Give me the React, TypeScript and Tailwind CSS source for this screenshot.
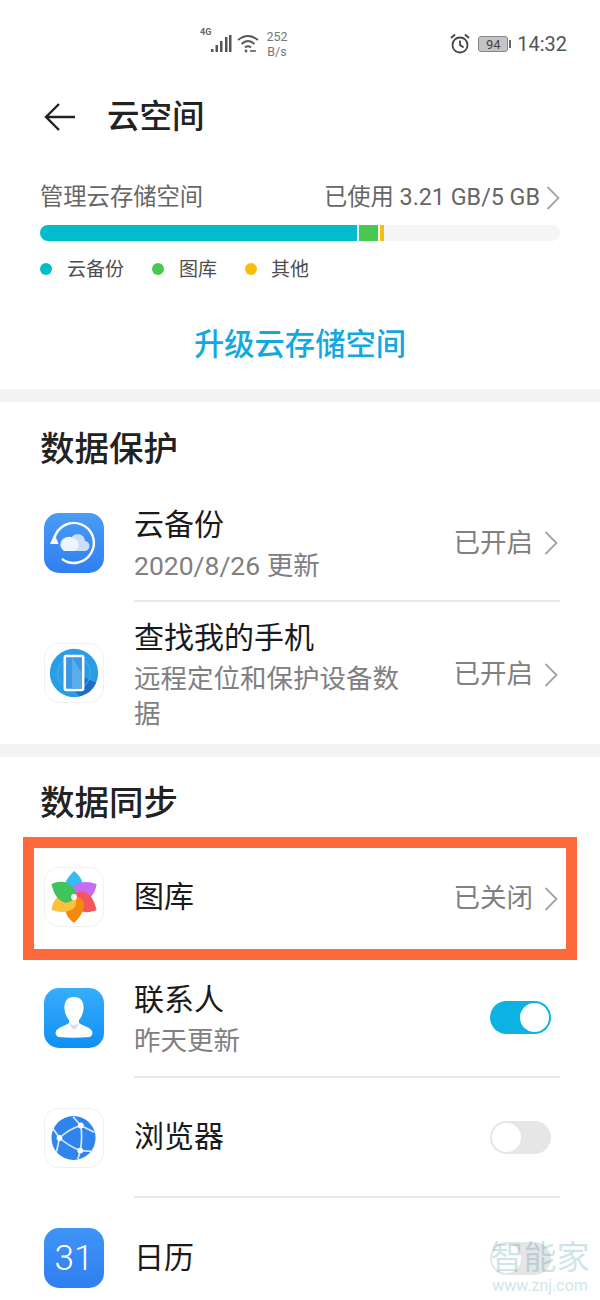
import { ReactNode } from "react";

const FONT = "font-['Roboto','Noto_Sans_CJK_SC',sans-serif]";

function Squircle({ children, className }: { children: ReactNode; className: string }) {
  return (
    <div className={`flex h-[60px] w-[60px] shrink-0 items-center justify-center overflow-hidden rounded-[15px] ${className}`}>
      {children}
    </div>
  );
}

function Chevron({ className }: { className: string }) {
  return (
    <svg width="14" height="24" viewBox="0 0 14 24" fill="none" stroke="#a3a3a3" strokeWidth="1.800" className={className}>
      <path d="M1.500 1 L12.500 12 L1.500 23" />
    </svg>
  );
}

function BackupIcon() {
  return (
    <Squircle className="bg-gradient-to-b from-[#4a9cf5] to-[#2f7ff0]">
      <svg width="60" height="60" viewBox="0 0 60 60" fill="none">
        <path d="M10.500 25 A20 20 0 1 1 18 46" stroke="#fff" strokeWidth="2.400" />
        <path d="M10.500 21 L6 31 L14.500 31 Z" fill="#fff" />
        <path d="M20 38 H40 A5 5 0 0 0 41 28 A7.500 7.500 0 0 0 27 25 A6.500 6.500 0 0 0 20 38 Z" fill="#c9dffa" />
        <path d="M20 38 H30 A6.500 6.500 0 0 0 31 26 A7 7 0 0 0 20 38 Z" fill="#eef5fe" />
      </svg>
    </Squircle>
  );
}

function FindPhoneIcon() {
  return (
    <Squircle className="border border-[#f1f1f1] bg-white">
      <svg width="60" height="60" viewBox="0 0 60 60" fill="none">
        <circle cx="30" cy="30" r="25" fill="#2b9de6" />
        <path d="M39 34 L53 40 A25 25 0 0 1 36 54 L30 48 H39 Z" fill="#1c6fc4" />
        <circle cx="30" cy="30" r="17" stroke="#4fb1ec" strokeWidth="1" />
        <rect x="20.500" y="12.500" width="19" height="35" rx="1.500" fill="#3d97e3" stroke="#fff" strokeWidth="2.600" />
        <path d="M28 14 L38 30 V46 H28 Z" fill="#5aaeea" />
      </svg>
    </Squircle>
  );
}

function GalleryIcon() {
  const petals = [
    { angle: 0, fill: "#35bdf0" },
    { angle: 60, fill: "#c56df0" },
    { angle: 120, fill: "#f4555f" },
    { angle: 180, fill: "#f58a0a" },
    { angle: 240, fill: "#fcc23f" },
    { angle: 300, fill: "#3fc45c" },
  ];
  return (
    <Squircle className="border border-[#f1f1f1] bg-white">
      <svg width="60" height="60" viewBox="0 0 60 60">
        {petals.map((p) => (
          <path
            key={p.angle}
            d="M30 3 C39 10 42 19 36 28 Q33 30 30 31 Q22 30 20 24 C19 15 24 9 30 3 Z"
            fill={p.fill}
            transform={`rotate(${p.angle} 30 30)`}
          />
        ))}
        <circle cx="30" cy="30" r="3" fill="#fff" />
      </svg>
    </Squircle>
  );
}

function ContactsIcon() {
  return (
    <Squircle className="bg-gradient-to-b from-[#35aefb] to-[#0d8ff5]">
      <svg width="60" height="60" viewBox="0 0 60 60">
        <path d="M30 9 C38 9 40 15 39.500 21 C39 26 37 30 35 32 V35 C39 38 46 39 48 43 Q49.500 47 46 49 Q30 50.500 14 49 Q10.500 47 12 43 C14 39 21 38 25 35 V32 C23 30 21 26 20.500 21 C20 15 22 9 30 9 Z" fill="#fff" />
        <path d="M25 35 Q30 39 35 35 L32 41 H28 Z" fill="#dcdcf5" />
      </svg>
    </Squircle>
  );
}

function BrowserIcon() {
  return (
    <Squircle className="border border-[#f1f1f1] bg-white">
      <svg width="60" height="60" viewBox="0 0 60 60" fill="none">
        <circle cx="29.500" cy="30" r="22.800" fill="#2f84ee" />
        <g stroke="#dcebfd" strokeWidth="1.700">
          <path d="M37 17 Q24 21 15 30 Q24 38 36.500 43 Q39 30 37 17" />
          <path d="M37 17 L29 8 M37 17 L51 24 M15 30 L8 20 M15 30 L12 44 M36.500 43 L50 44 M36.500 43 L34 52" />
        </g>
        <circle cx="37" cy="17" r="3" fill="#fff" />
        <circle cx="15" cy="30" r="3" fill="#fff" />
        <circle cx="36.500" cy="43" r="3" fill="#fff" />
      </svg>
    </Squircle>
  );
}

function CalendarIcon() {
  return (
    <Squircle className="bg-gradient-to-b from-[#3f94f6] to-[#2f7ff0]">
      <span className="text-[35px] leading-none font-light text-white">31</span>
    </Squircle>
  );
}

function RightValue({ text }: { text: string }) {
  return (
    <div className="flex shrink-0 items-center pt-[3px]">
      <span className="text-[26.500px] leading-none text-[#808080]">{text}</span>
      <Chevron className="mr-[2px] ml-[11px]" />
    </div>
  );
}

function Toggle({ on }: { on: boolean }) {
  return (
    <div className={`mr-[9px] flex h-[33px] w-[61px] items-center rounded-full p-[2px] ${on ? "justify-end bg-[#0bb2e2]" : "justify-start bg-[#e6e6e6]"}`}>
      <div className="h-[29px] w-[29px] rounded-full bg-white" />
    </div>
  );
}

function Row({
  icon,
  title,
  sub,
  right,
  height,
  divider = true,
  titleTop = false,
  raised = false,
}: {
  icon: ReactNode;
  title: string;
  sub?: string;
  right?: ReactNode;
  height: string;
  divider?: boolean;
  titleTop?: boolean;
  raised?: boolean;
}) {
  return (
    <div className={`flex items-center pl-[44px] pr-[40px] ${height}`}>
      <div className={`mr-[30px] ${raised ? "mb-[12px]" : ""}`}>{icon}</div>
      <div className={`flex h-full min-w-0 flex-1 items-center ${divider ? "border-b-2 border-[#e8e8e8]" : ""} ${raised ? "pb-[12px]" : ""}`}>
        <div className={`min-w-0 flex-1 ${titleTop ? "self-start pt-[16px]" : sub ? "pt-[4px]" : ""}`}>
          <div className="text-[30px] leading-[40px] text-[#1a1a1a]">{title}</div>
          {sub && <div className="mt-[3px] w-[272px] text-[26.500px] leading-[35px] text-[#808080]">{sub}</div>}
        </div>
        {right}
      </div>
    </div>
  );
}

function SectionTitle({ text, height }: { text: string; height: string }) {
  return (
    <div className={`flex items-center px-[40px] pt-[2px] text-[34.500px] font-medium text-[#222] ${height}`}>{text}</div>
  );
}

function LegendItem({ color, label, gap }: { color: string; label: string; gap: string }) {
  return (
    <div className={`flex items-center ${gap}`}>
      <span className={`h-[12px] w-[12px] rounded-full ${color}`} />
      <span className="text-[19px] leading-none text-[#4d4d4d]">{label}</span>
    </div>
  );
}

export default function App() {
  return (
    <div className={`relative h-[1300px] w-[600px] overflow-hidden bg-white ${FONT}`}>
      {/* Status bar */}
      <div className="flex h-[64px] items-center pt-[24px] pr-[33px] pl-[200px]">
        <div className="relative flex items-center">
          <span className="absolute top-[-1px] left-0 text-[9px] leading-none font-bold text-[#666]">4G</span>
          <svg width="32" height="20" viewBox="0 0 32 20" className="ml-[1px]" fill="#555">
            <rect x="10" y="15" width="2.500" height="3" />
            <rect x="14.500" y="11" width="2.500" height="7" />
            <rect x="19" y="7" width="2.500" height="11" />
            <rect x="24" y="3" width="2.500" height="15" />
            <rect x="28" y="1" width="2.500" height="17" />
          </svg>
          <svg width="24" height="20" viewBox="0 0 24 20" fill="none" stroke="#555" strokeWidth="1.800" className="ml-[3px]">
            <path d="M2 6 Q12 -2 22 6" />
            <path d="M5.500 10 Q12 4 18.500 10" />
            <path d="M9 13.500 Q12 11 15 13.500" />
            <circle cx="10" cy="17" r="1.400" fill="#555" stroke="none" />
            <path d="M14 17 h6" strokeWidth="1.500" />
          </svg>
          <div className="ml-[5px] w-[24px] text-center text-[12.500px] leading-[15px] text-[#777]">
            <div>252</div>
            <div>B/s</div>
          </div>
        </div>
        <div className="ml-auto flex items-center">
          <svg width="22" height="22" viewBox="0 0 22 22" fill="none" stroke="#444" strokeWidth="1.800">
            <circle cx="11" cy="12" r="7.500" />
            <path d="M11 7.500 V12 L14.500 14.500" />
            <path d="M2 5 L6 1.500 M20 5 L16 1.500" />
          </svg>
          <div className="ml-[7px] flex items-center">
            <div className="flex h-[16px] w-[30px] items-center justify-center rounded-[3px] border border-[#888] bg-[#c4c4c4] text-[13px] leading-none text-[#444]">
              94
            </div>
            <div className="ml-[1px] h-[8px] w-[2px] bg-[#666]" />
          </div>
          <span className="ml-[6px] text-[20px] leading-none text-[#555]">14:32</span>
        </div>
      </div>

      {/* Header */}
      <div className="flex h-[106px] items-center pl-[44px]">
        <svg width="32" height="30" viewBox="0 0 32 30" fill="none" stroke="#222" strokeWidth="2.400">
          <path d="M31 15 H2 M15 2 L2 15 L15 28" />
        </svg>
        <span className="ml-[31px] text-[32.500px] leading-none font-medium text-[#222]">云空间</span>
      </div>

      {/* Storage */}
      <div className="h-[219px] px-[40px] pt-[12px]">
        <div className="flex h-[32px] items-center justify-between">
          <span className="text-[23.300px] leading-none text-[#666]">管理云存储空间</span>
          <div className="flex items-center">
            <span className="text-[23.300px] leading-none text-[#666]">已使用 3.21 GB/5 GB</span>
            <Chevron className="ml-[6px]" />
          </div>
        </div>
        <div className="mt-[11px] flex h-[16px] overflow-hidden rounded-full bg-[#f5f5f5]">
          <div className="w-[317px] bg-[#03bccb]" />
          <div className="ml-[2px] w-[19px] bg-[#46c94e]" />
          <div className="ml-[2px] w-[4px] bg-[#fbbd0d]" />
        </div>
        <div className="mt-[18px] flex h-[20px] items-center">
          <LegendItem color="bg-[#03bccb]" label="云备份" gap="gap-[15px]" />
          <div className="w-[28px]" />
          <LegendItem color="bg-[#46c94e]" label="图库" gap="gap-[15px]" />
          <div className="w-[28px]" />
          <LegendItem color="bg-[#fbbd0d]" label="其他" gap="gap-[14px]" />
        </div>
        <div className="mt-[46px] text-center text-[30.300px] leading-[40px] font-medium text-[#12a9e0]">升级云存储空间</div>
      </div>

      <div className="h-[13px] bg-[#f4f4f4]" />

      {/* 数据保护 */}
      <SectionTitle text="数据保护" height="h-[93px]" />
      <Row
        icon={<BackupIcon />}
        title="云备份"
        sub="2020/8/26 更新"
        right={<RightValue text="已开启" />}
        height="h-[107px]"
        raised
      />
      <Row
        icon={<FindPhoneIcon />}
        title="查找我的手机"
        sub="远程定位和保护设备数据"
        right={<RightValue text="已开启" />}
        height="h-[142px]"
        divider={false}
        titleTop
      />

      <div className="h-[13px] bg-[#f4f4f4]" />

      {/* 数据同步 */}
      <SectionTitle text="数据同步" height="h-[92px]" />
      <Row icon={<GalleryIcon />} title="图库" right={<RightValue text="已关闭" />} height="h-[96px]" divider={false} />
      <div className="h-[13px]" />
      <Row icon={<ContactsIcon />} title="联系人" sub="昨天更新" right={<Toggle on />} height="h-[120px]" />
      <Row icon={<BrowserIcon />} title="浏览器" right={<Toggle on={false} />} height="h-[120px]" />
      <Row icon={<CalendarIcon />} title="日历" right={<Toggle on={false} />} height="h-[120px]" divider={false} />

      {/* Highlight box */}
      <div className="absolute top-[837px] left-[23px] h-[123px] w-[554px] border-[11px] border-[#ff6a3d]" />

      {/* Watermark */}
      <div className="absolute top-[1238px] left-[490px] w-[100px] text-center text-[#0f7f8f] opacity-20">
        <div className="text-[33px] leading-[40px]">智能家</div>
        <div className="text-[16px] leading-[16px]">www.znj.com</div>
      </div>
    </div>
  );
}
